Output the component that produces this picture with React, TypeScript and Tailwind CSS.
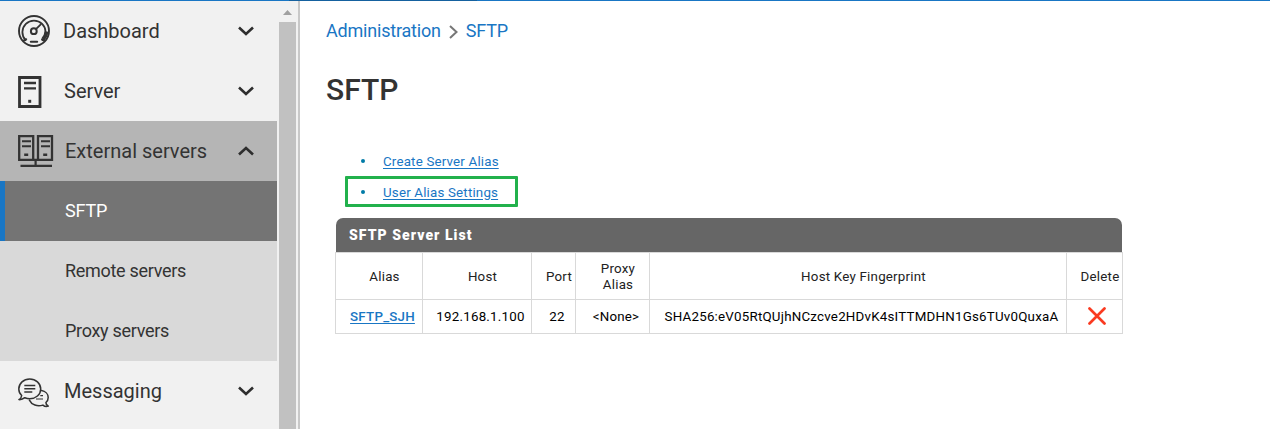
import React from "react";

function Chevron({ up = false }: { up?: boolean }) {
  return (
    <svg width="17" height="10" viewBox="0 0 17 10" fill="none" stroke="#2e2e2e" strokeWidth="2.6">
      <path d={up ? "M1 8.5 8 2 15 8.5" : "M1 1.5 8 8 15 1.5"} />
    </svg>
  );
}

function GaugeIcon() {
  return (
    <svg width="32" height="32" viewBox="0 0 32 32" fill="none" stroke="#333" strokeLinecap="round">
      <circle cx="16" cy="16" r="15" strokeWidth="1.9" />
      <path d="M7.6 25.2a11.6 11.6 0 1 1 16.8 0" strokeWidth="1.8" />
      <path d="M6 25.4 8.2 24.2M24 24.2l2.2 1.4" strokeWidth="2" />
      <path d="M28.6 16.5a13 13 0 0 1-3.4 7.6" strokeWidth="4" strokeLinecap="butt" />
      <circle cx="15.8" cy="16.2" r="2.9" strokeWidth="2" />
      <path d="M18.2 13.8 22.8 9.3" strokeWidth="1.8" />
      <path d="M12.8 26.8h6.4" strokeWidth="2" />
    </svg>
  );
}

function ServerIcon() {
  return (
    <svg className="mt-0.5" width="24" height="32" viewBox="0 0 24 32" fill="none" stroke="#333">
      <path d="M1.5 1.5h20.5v29H1.5z" strokeWidth="2.8" />
      <path d="M6 7h12M6 12.4h12" strokeWidth="2.4" />
      <path d="M10.2 25.3h3" strokeWidth="3" />
    </svg>
  );
}

function ServersIcon() {
  return (
    <svg width="36" height="32" viewBox="0 0 36 32" fill="none" stroke="#333">
      <path d="M1.2 1.2h14v23.6h-14zM20 1.2h14v23.6H20z" strokeWidth="2.3" />
      <path d="M4 6.2h9M4 11.3h9M23 6.2h9M23 11.3h9" strokeWidth="2" />
      <path d="M6.2 19.7h4M25.2 19.7h4" strokeWidth="2.4" />
      <path d="M15.5 24.8h4.5M17.6 25v6M2.5 30.8H34" strokeWidth="2.2" />
    </svg>
  );
}

function ChatIcon() {
  return (
    <svg className="mt-[3px]" width="32" height="30" viewBox="0 0 32 30" fill="none" stroke="#333" strokeWidth="1.5" strokeLinejoin="round" strokeLinecap="round">
      <path d="M.9 21.6C2.400 20.800 3.500 19.400 3.700 17.500 1.800 15.800.8 13.600.8 11 .8 5.300 5.700 1 11.700 1s11 4.300 11 10-5 9.700-11 9.700c-1.700 0-3.400-.4-4.900-1C5.200 21 3.200 21.800.9 21.600z" />
      <path d="M23.500 12.500c3.900.6 6.700 3.500 6.700 6.900 0 2-.8 3.800-2.300 5.100-.1 1.500.7 2.700 2.400 3.600-2 .7-3.800.3-5.400-1-5.500 1.700-11.300-.2-13.500-5" />
      <path d="M6.300 7.500h11M6.300 10.800h11M6.300 14h8" strokeWidth="1.6" strokeLinecap="butt" />
      <path d="M22.300 17.600h2.700M18 21h7" strokeWidth="1.2" strokeLinecap="butt" />
    </svg>
  );
}

function MenuRow({ icon, label, text, active = false }: { icon: React.ReactNode; label: string; text: string; active?: boolean }) {
  return (
    <div className={`flex h-[60px] shrink-0 items-center pr-[22px] pl-[18px] ${active ? "bg-[#b5b5b5]" : ""}`}>
      <div className="flex w-[45px] shrink-0 items-center">{icon}</div>
      <span className={`grow whitespace-nowrap text-[20px] leading-[30px] text-[#333] ${text}`}>{label}</span>
      <Chevron up={active} />
    </div>
  );
}

function Sidebar() {
  return (
    <nav className="flex w-[277px] shrink-0 flex-col overflow-hidden">
      <MenuRow icon={<GaugeIcon />} label="Dashboard" text="tracking-[0px]" />
      <MenuRow icon={<ServerIcon />} label="Server" text="pl-px tracking-[0px]" />
      <MenuRow icon={<ServersIcon />} label="External servers" text="pl-0.5 tracking-[0px]" active />
      <div className="flex h-[60px] shrink-0 items-center border-l-[5px] border-[#1976c4] bg-[#747474] pb-0.5 pl-[60px] text-[18px] tracking-[-0.2px] text-white">
        SFTP
      </div>
      <div className="flex h-[60px] shrink-0 items-center bg-[#d9d9d9] pb-0.5 pl-[65px] text-[18px] tracking-[-0.3px] text-[#333]">
        Remote servers
      </div>
      <div className="flex h-[60px] shrink-0 items-center bg-[#d9d9d9] pb-0.5 pl-[65px] text-[18px] tracking-[-0.3px] text-[#333]">
        Proxy servers
      </div>
      <MenuRow icon={<ChatIcon />} label="Messaging" text="pl-px tracking-[0px]" />
    </nav>
  );
}

function Scrollbar() {
  return (
    <div className="ml-0.5 flex w-[17px] shrink-0 flex-col items-center">
      <div className="flex h-[21px] items-center pt-0.5">
        <svg width="9" height="5" viewBox="0 0 9 5">
          <path d="M4.500 0 9 5H0z" fill="#a0a0a0" />
        </svg>
      </div>
      <div className="w-full grow bg-[#c1c1c1]" />
    </div>
  );
}

const cell = "flex items-center justify-center border-l border-t border-[#d9d9d9]";
const head = "pt-0.5 pl-[11px]";
const body = "pt-px pl-[7px]";

export default function App() {
  return (
    <div className="flex h-[429px] w-[1270px] flex-col overflow-hidden bg-white font-[Roboto,sans-serif]">
      <div className="flex h-px shrink-0 bg-[#1976c4]">
        <div className="ml-[289px] w-[188px] bg-[#15619f]" />
      </div>
      <div className="flex min-h-0 grow">
        <div className="flex w-[300px] shrink-0 border-r-2 border-[#c8c8c8] bg-[#f1f1f1]">
          <Sidebar />
          <Scrollbar />
        </div>
        <main className="flex grow flex-col">
          <div className="mt-[15px] ml-[26px] flex h-7 items-center text-[18px] text-[#1976c4]">
            <span className="tracking-[-0.2px]">Administration</span>
            <svg className="mt-1 mr-[8px] ml-[8px]" width="9" height="14" viewBox="0 0 9 14" fill="none" stroke="#777" strokeWidth="2">
              <path d="M1 1 7.500 7 1 13" />
            </svg>
            <span className="tracking-[-0.2px]">SFTP</span>
          </div>
          <h1 className="mt-[26px] ml-[26px] text-[30px] leading-[40px] font-medium text-[#333]">SFTP</h1>
          <ul className="mt-[35px] ml-[45px] flex w-[173px] flex-col text-[13.33px] tracking-[0.18px] text-[#1976c4]">
            <li className="flex h-[31px] items-center pl-4">
              <span className="mr-[18px] size-1 rounded-full bg-[#007ba7]" />
              <a className="pt-0.5 underline underline-offset-2">Create Server Alias</a>
            </li>
            <li className="flex h-[31px] items-center rounded-[1px] border-3 border-[#22b14c] pl-[13px]">
              <span className="mr-[18px] size-1 rounded-full bg-[#007ba7]" />
              <a className="pt-0.5 underline underline-offset-2">User Alias Settings</a>
            </li>
          </ul>
          <section className="mt-[11px] ml-[35px] w-[788px] text-[13.33px] tracking-[0.22px] text-[#222]">
            <div className="mx-px flex h-[34px] w-[786px] items-center rounded-t-[7px] bg-[#666] pl-[13px] text-[14px] font-black tracking-[1.05px] text-white">
              SFTP Server List
            </div>
            <div className="grid grid-cols-[87px_109px_44px_74px_417px_56px] grid-rows-[47px_34px] border-r border-b border-[#d9d9d9]">
              <div className={`${cell} ${head}`}>Alias</div>
              <div className={`${cell} ${head}`}>Host</div>
              <div className={`${cell} ${head}`}>Port</div>
              <div className={`${cell} ${head} text-center leading-4`}>Proxy<br />Alias</div>
              <div className={`${cell} ${head}`}>Host Key Fingerprint</div>
              <div className={`${cell} ${head}`}>Delete</div>
              <div className={`${cell} ${body}`}>
                <a className="font-medium text-[#1976c4] underline underline-offset-2">SFTP_SJH</a>
              </div>
              <div className={`${cell} ${body} text-black`}>192.168.1.100</div>
              <div className={`${cell} ${body} text-black`}>22</div>
              <div className={`${cell} ${body} text-black`}>&lt;None&gt;</div>
              <div className={`${cell} ${body} text-black`}>SHA256:eV05RtQUjhNCzcve2HDvK4sITTMDHN1Gs6TUv0QuxaA</div>
              <div className={`${cell} pb-px pl-[5px]`}>
                <svg width="18" height="18" viewBox="0 0 18 18" fill="none" stroke="#fa3a20" strokeWidth="2.7" strokeLinecap="round">
                  <path d="M1.500 1.500 16.500 16.500M16.500 1.500 1.500 16.500" />
                </svg>
              </div>
            </div>
          </section>
        </main>
      </div>
    </div>
  );
}
